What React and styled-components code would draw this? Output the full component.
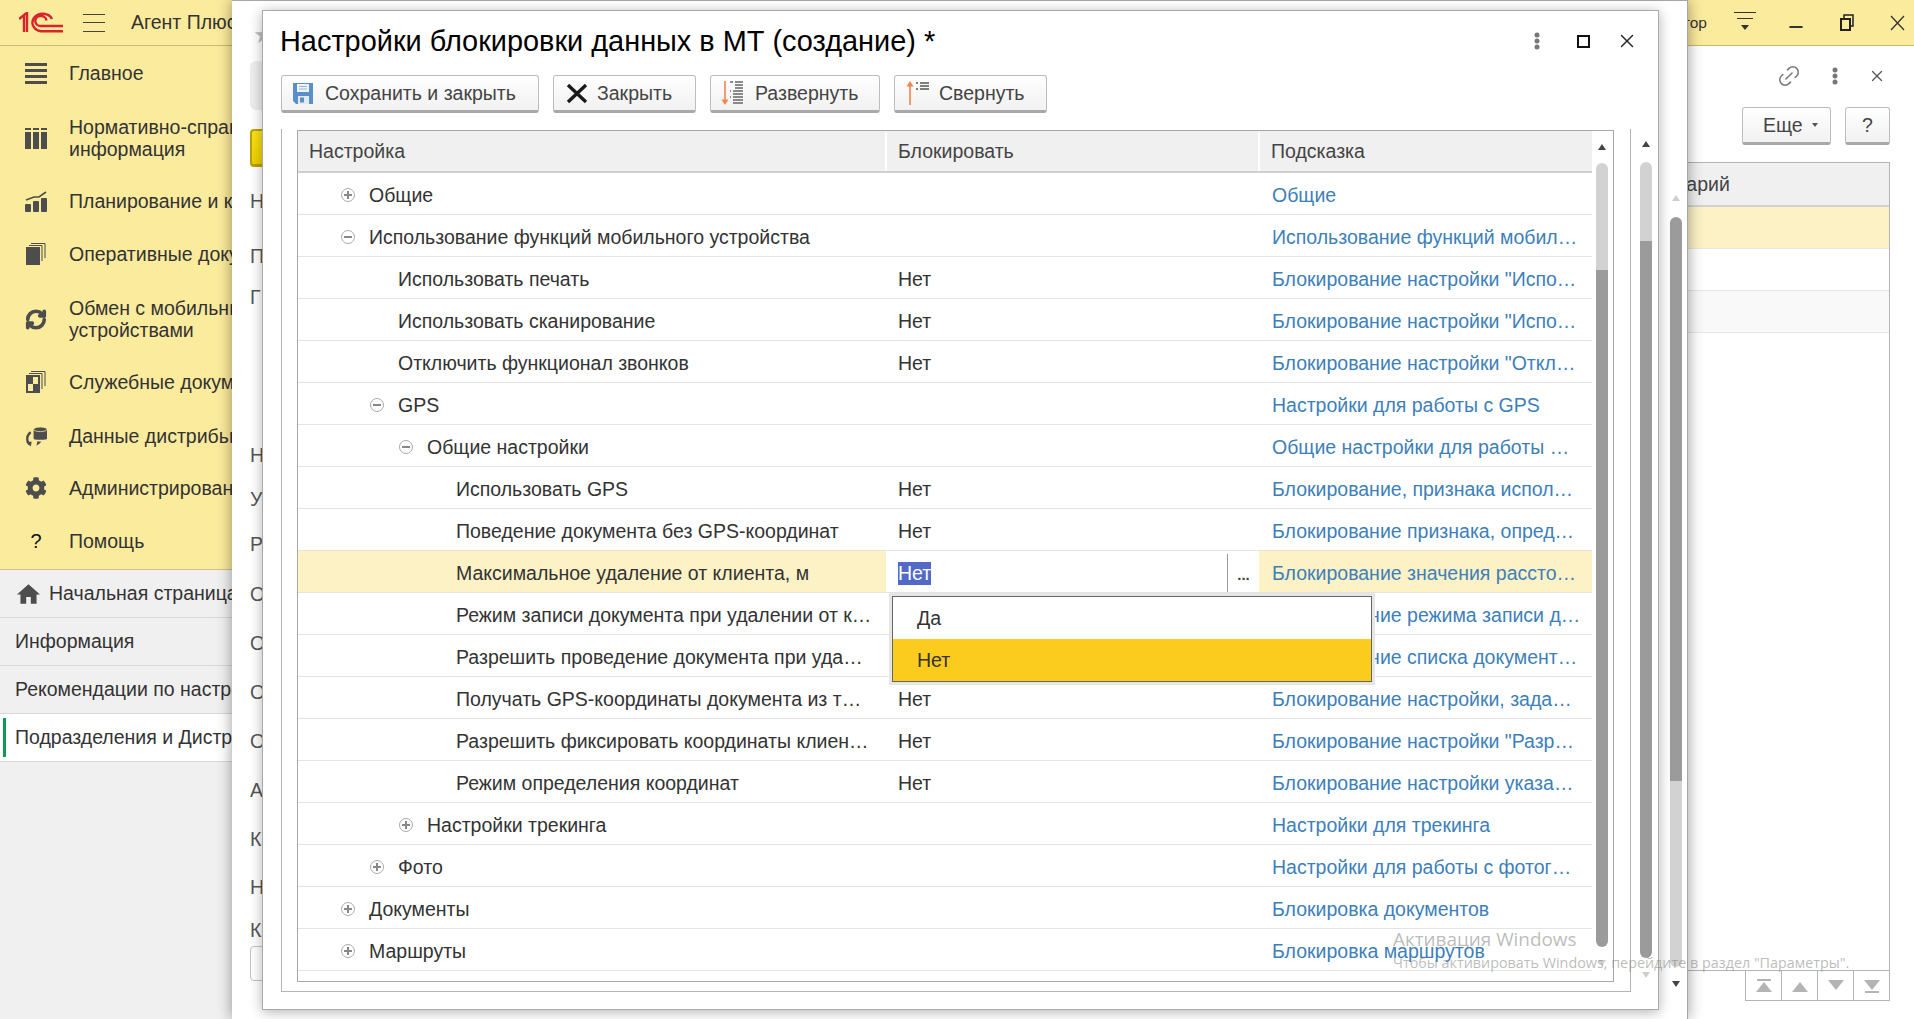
import React from "react";
import styled, { createGlobalStyle } from "styled-components";
import { RefreshCw, Link2, X, Minus } from "lucide-react";
import { FaCog } from "react-icons/fa";

const GlobalStyle = createGlobalStyle`
  html, body {
    margin: 0;
    height: 100%;
    overflow: hidden;
    background: #fff;
  }
  * { box-sizing: border-box; }
  body {
    font-family: "Liberation Sans", Arial, sans-serif;
    font-size: 19.5px;
    color: #333;
  }
`;

const Page = styled.div`
  position: relative;
  width: 1914px;
  height: 1019px;
  overflow: hidden;
  display: flex;
  flex-direction: column;
`;

const TopBar = styled.header`
  height: 46px;
  flex: none;
  display: flex;
  align-items: center;
  background: #fbeb9d;
  border-bottom: 1px solid #c9b974;
  padding-left: 19px;
`;

const Burger = styled.div`
  width: 22px;
  margin: 0 26px 0 20px;
  height: 18px;
  border-top: 1px solid #444;
  border-bottom: 1px solid #444;
  display: flex;
  align-items: center;
  &::before {
    content: "";
    flex: 1;
    height: 1px;
    background: #444;
  }
`;

const AppName = styled.div`
  white-space: nowrap;
`;

const TopRight = styled.div`
  margin-left: auto;
  display: flex;
  align-items: center;
  height: 100%;
`;

const UserName = styled.div`
  width: 120px;
  text-align: right;
  font-size: 15.5px;
  margin-right: 12px;
`;

const TopIcon = styled.div`
  width: ${(p) => p.$w || 51}px;
  margin-left: ${(p) => p.$ml || 0}px;
  display: flex;
  justify-content: center;
  color: #333;
`;

const Body = styled.div`
  flex: 1;
  display: flex;
  min-height: 0;
`;

const Sidebar = styled.aside`
  width: 232px;
  flex: none;
  overflow: hidden;
  display: flex;
  flex-direction: column;
  background: #f0f0f0;
`;

const SectionList = styled.nav`
  background: #fbeb9d;
  border-bottom: 1px solid #cfc187;
  display: flex;
  flex-direction: column;
`;

const SectionItem = styled.div`
  height: ${(p) => p.$h}px;
  display: flex;
  align-items: center;
  padding-left: 25px;
  gap: 22px;
  line-height: 22px;
  white-space: nowrap;
`;

const SectionIcon = styled.div`
  width: 22px;
  display: flex;
  justify-content: center;
  color: #4d4d4d;
  flex: none;
  font-size: 20px;
`;

const Tab = styled.div`
  height: 48px;
  display: flex;
  align-items: center;
  gap: 9px;
  padding-left: ${(p) => (p.$home ? 17 : 15)}px;
  position: relative;
  white-space: nowrap;
  background: ${(p) => (p.$active ? "#fff" : "#f0f0f0")};
  border-bottom: 1px solid #d8d8d8;
  svg {
    flex: none;
  }
  ${(p) =>
    p.$active &&
    `&::before {
      content: "";
      position: absolute;
      left: 3px;
      top: 4px;
      bottom: 4px;
      width: 3px;
      background: #0c9a54;
    }`}
`;

const Workspace = styled.main`
  flex: 1;
  min-width: 0;
  padding: 0 24px 18px 0;
  display: flex;
  flex-direction: column;
  align-items: stretch;
`;

const TitleTools = styled.div`
  height: 60px;
  display: flex;
  justify-content: flex-end;
  align-items: center;
  gap: 30px;
  padding-right: 4px;
  margin-bottom: 1px;
  color: #777;
`;

const CommandRow = styled.div`
  display: flex;
  justify-content: flex-end;
  gap: 14px;
`;

const Button = styled.button`
  height: 38px;
  width: ${(p) => p.$w}px;
  flex: none;
  display: flex;
  align-items: center;
  justify-content: ${(p) => (p.$pad ? "flex-start" : "center")};
  gap: ${(p) => p.$gap || 10}px;
  padding: 0 0 0 ${(p) => p.$pad || 0}px;
  font-family: inherit;
  font-size: 19.5px;
  color: #444;
  background: linear-gradient(#ffffff, #f1f1f1);
  border: 1px solid #bdbdbd;
  border-bottom: 3px solid #a9a9a9;
  border-radius: 3px;
`;

const Caret = styled.span`
  width: 0;
  height: 0;
  border-left: 3.5px solid transparent;
  border-right: 3.5px solid transparent;
  border-top: 4px solid #555;
`;

const ListBox = styled.div`
  margin-top: 17px;
  flex: 1;
  border: 1px solid #b4b4b4;
  display: flex;
  flex-direction: column;
`;

const ListHead = styled.div`
  height: 44px;
  display: grid;
  grid-template-columns: 1fr 282px;
  align-items: center;
  background: #f0f0f0;
  border-bottom: 2px solid #d2d2d2;
  color: #444;
`;

const ListRow = styled.div`
  height: 42px;
  background: ${(p) => p.$bg};
  border-bottom: 1px solid #e6e6e6;
`;

const Pager = styled.div`
  align-self: flex-end;
  display: flex;
  border-left: 1px solid #b4b4b4;
  border-bottom: 1px solid #b4b4b4;
`;

const PagerCell = styled.div`
  width: 36px;
  height: 29px;
  border-right: 1px solid #b4b4b4;
  display: flex;
  align-items: center;
  justify-content: center;
`;

/* окно формы, из которой открыта настройка (лежит за диалогом) */
const BackWindow = styled.section`
  position: absolute;
  left: 232px;
  top: 0;
  width: 1456px;
  height: 1019px;
  background: #fff;
  border-top: 1px solid #a6a6a6;
  border-right: 1px solid #a6a6a6;
  box-shadow: 0 0 14px rgba(0, 0, 0, 0.4);
  display: flex;
  justify-content: flex-end;
  padding: 0 5px 0 18px;
`;

const BackForm = styled.div`
  flex: 1;
  display: flex;
  flex-direction: column;
  min-width: 0;
`;

const Star = styled.div`
  height: 60px;
  padding: 22px 0 0 3px;
  color: #b9bfc7;
  font-size: 24px;
  line-height: 24px;
`;

const BackToolbar = styled.div`
  height: 49px;
  width: 300px;
  background: #eeeeee;
  border-radius: 6px;
`;

const BackPrimary = styled.div`
  height: 38px;
  width: 200px;
  margin-top: 19px;
  background: linear-gradient(#fce21a, #f0cf00);
  border: 2px solid #b7a300;
  border-bottom-width: 3px;
  border-radius: 4px;
`;

const FormLabel = styled.div`
  margin-top: ${(p) => p.$top}px;
  line-height: 24px;
  color: #555;
`;

const BackInput = styled.div`
  height: 35px;
  width: 300px;
  margin-top: 4px;
  border: 1px solid #c4c4c4;
  border-radius: 4px;
`;

const ScrollColumn = styled.div`
  width: ${(p) => p.$w || 12}px;
  flex: none;
  display: flex;
  flex-direction: column;
  align-items: center;
  padding-top: ${(p) => p.$top}px;
`;

const ScrollPart = styled.div`
  width: 12px;
  height: ${(p) => p.$h}px;
  background: ${(p) => (p.$dark ? "#9b9b9b" : "#d2d2d2")};
  border-radius: ${(p) => (p.$start ? "6px 6px 0 0" : p.$end ? "0 0 6px 6px" : "0")};
  flex: none;
`;

const Arrow = styled.div`
  width: 0;
  height: 0;
  flex: none;
  margin-top: ${(p) => p.$mt || 0}px;
  margin-bottom: ${(p) => p.$mb || 0}px;
  border-left: 4px solid transparent;
  border-right: 4px solid transparent;
  ${(p) =>
    p.$down
      ? `border-top: 6px solid ${p.$c};`
      : `border-bottom: 6px solid ${p.$c};`}
`;

const Dialog = styled.section`
  position: absolute;
  left: 262px;
  top: 10px;
  width: 1397px;
  height: 1000px;
  background: #fff;
  border: 1px solid #a9a9a9;
  box-shadow: 0 2px 12px rgba(0, 0, 0, 0.3);
  display: flex;
  padding: 0 6px 0 18px;
`;

const DialogMain = styled.div`
  flex: 1;
  min-width: 0;
  display: flex;
  flex-direction: column;
`;

const TitleRow = styled.div`
  height: 47px;
  display: flex;
  align-items: center;
  padding-top: 13px;
`;

const Title = styled.h1`
  margin: 0 0 0 -1px;
  font-size: 28.9px;
  font-weight: 400;
  color: #000;
  white-space: nowrap;
`;

const WindowTools = styled.div`
  margin-left: auto;
  margin-right: 2px;
  display: flex;
  align-items: center;
  gap: 22px;
`;

const ToolDots = styled.span`
  display: flex;
  margin-right: 15px;
`;

const DialogCommands = styled.div`
  height: 39px;
  margin-top: 17px;
  display: flex;
  gap: 14px;
`;

const Frame = styled.div`
  margin-top: 15px;
  width: 1350px;
  height: 863px;
  border-left: 1px solid #b4b4b4;
  border-right: 1px solid #b4b4b4;
  border-bottom: 1px solid #b4b4b4;
  padding: 1px 16px 9px 15px;
`;

const Table = styled.div`
  height: 100%;
  border: 1px solid #a8a8a8;
  display: flex;
`;

const TableBody = styled.div`
  width: 1294px;
  flex: none;
  display: flex;
  flex-direction: column;
`;

const Columns = styled.div`
  display: grid;
  grid-template-columns: 588px 373px 1fr;
`;

const HeadRow = styled(Columns)`
  height: 42px;
  padding-top: 1px;
  background: #f0f0f0;
  border-bottom: 2px solid #cfcfcf;
  color: #444;
`;

const HeadCell = styled.div`
  padding-left: 11px;
  display: flex;
  align-items: center;
  border-left: ${(p) => (p.$first ? "0" : "2px solid #fff")};
  margin-left: ${(p) => (p.$first ? 0 : -1)}px;
`;

const Row = styled(Columns)`
  height: 42px;
  padding-top: 3px;
  border-bottom: 1px solid #e4e4e4;
  background: ${(p) => (p.$selected ? "#fdf2c6" : "#fff")};
`;

const TreeCell = styled.div`
  display: flex;
  align-items: center;
  padding-left: ${(p) => p.$level * 29 + 43}px;
  white-space: nowrap;
  overflow: hidden;
`;

const Toggle = styled.span`
  width: 14px;
  height: 14px;
  flex: none;
  margin-right: 14px;
  border: 1px solid #aaa;
  border-radius: 50%;
  position: relative;
  &::before {
    content: "";
    position: absolute;
    left: 2px;
    right: 2px;
    top: 5px;
    height: 2px;
    background: #888;
  }
  ${(p) =>
    p.$plus &&
    `&::after {
      content: "";
      position: absolute;
      top: 2px;
      bottom: 2px;
      left: 5px;
      width: 2px;
      background: #888;
    }`}
`;

const ToggleGap = styled.span`
  width: 28px;
  flex: none;
`;

const ValueCell = styled.div`
  display: flex;
  align-items: center;
  padding-left: 12px;
  white-space: nowrap;
`;

const EditCell = styled.div`
  display: flex;
  align-items: center;
  background: #fff;
  padding-left: 12px;
  margin: -3px 0 0;
  padding-top: 3px;
`;

const EditValue = styled.span`
  background: #5269c6;
  color: #fff;
  line-height: 23px;
`;

const Choice = styled.span`
  margin-left: auto;
  width: 32px;
  align-self: stretch;
  border-left: 1px solid #999;
  display: flex;
  align-items: center;
  justify-content: center;
  font-weight: 700;
  font-size: 15px;
  color: #444;
  padding-top: 3px;
`;

const HintCell = styled.div`
  display: flex;
  align-items: center;
  padding-left: 13px;
  color: #3d7fbb;
  white-space: nowrap;
`;

const Dropdown = styled.ul`
  position: absolute;
  left: 892px;
  top: 596px;
  width: 480px;
  margin: 0;
  padding: 0;
  list-style: none;
  background: #fff;
  border: 1px solid #666;
  box-shadow: 0 0 0 3px #e6e6e6;
`;

const DropdownItem = styled.li`
  height: 42px;
  display: flex;
  align-items: center;
  padding-left: 24px;
  background: ${(p) => (p.$current ? "#fbcb1e" : "#fff")};
`;

const Watermark = styled.div`
  position: absolute;
  left: 1393px;
  top: 926px;
  pointer-events: none;
  color: rgba(130, 130, 130, 0.55);
  font-family: "Open Sans", sans-serif;
  white-space: nowrap;
`;

const WatermarkTitle = styled.div`
  font-size: 18.9px;
  line-height: 26px;
`;

const WatermarkText = styled.div`
  font-size: 14.35px;
  line-height: 20px;
  margin-top: 1px;
`;

const Logo = () => (
  <svg width="44" height="21" viewBox="0 0 44 21" fill="none" stroke="#d9232e" strokeWidth="2.4">
    <path d="M0 7 L5 3 V20 M5 3 L8 1 V20" />
    <path d="M33 7 A10.2 8.8 0 1 0 22 19.2 H44" />
    <path d="M27.5 8.5 A5.6 5 0 1 0 22 14 H44" />
  </svg>
);

const IconMain = () => (
  <svg width="22" height="21" viewBox="0 0 22 21" fill="currentColor">
    <rect y="0" width="22" height="3" />
    <rect y="6" width="22" height="3" />
    <rect y="12" width="22" height="3" />
    <rect y="18" width="22" height="3" />
  </svg>
);

const IconCatalog = () => (
  <svg width="22" height="21" viewBox="0 0 22 21" fill="currentColor">
    <path d="M0 0h6v2H0zM8 0h6v2H8zM16 0h6v2h-6zM0 4h6v17H0zM8 4h6v17H8zM16 4h6v17h-6z" />
  </svg>
);

const IconPlan = () => (
  <svg width="22" height="21" viewBox="0 0 22 21" fill="currentColor">
    <rect x="0" y="13" width="6" height="8" rx="1" />
    <rect x="8" y="10" width="6" height="11" rx="1" />
    <rect x="16" y="7" width="6" height="14" rx="1" />
    <path d="M1 9 L9 6 L14 6 L21 1" fill="none" stroke="currentColor" strokeWidth="1.6" />
  </svg>
);

const IconDocs = () => (
  <svg width="20" height="22" viewBox="0 0 20 22" fill="currentColor">
    <rect x="0" y="4" width="14" height="18" />
    <path d="M3 2.5H16V18" fill="none" stroke="currentColor" strokeWidth="1" />
    <path d="M5 .5H19V15" fill="none" stroke="currentColor" strokeWidth="1" />
  </svg>
);

const IconService = () => (
  <svg width="20" height="22" viewBox="0 0 20 22" fill="currentColor">
    <rect x="0" y="4" width="14" height="18" />
    <rect x="7" y="6" width="5" height="7" fill="#fbeb9d" />
    <rect x="2" y="13" width="5" height="7" fill="#fbeb9d" />
    <path d="M3 2.5H16V18" fill="none" stroke="currentColor" strokeWidth="1" />
    <path d="M5 .5H19V15" fill="none" stroke="currentColor" strokeWidth="1" />
  </svg>
);

const IconData = () => (
  <svg width="23" height="21" viewBox="0 0 23 21" fill="currentColor">
    <path d="M9 3H23V12.5C23 14.5 9 14.5 9 12.5z" />
    <ellipse cx="16" cy="3" rx="7" ry="2.4" stroke="#fbeb9d" strokeWidth="0.8" />
    <path d="M6 6 C1.5 9 1 15 5 19" fill="none" stroke="currentColor" strokeWidth="2.4" />
    <path d="M1 16l6 0-1 5z" />
    <path d="M12 20c2-1 4-2.500 5-4l-4-.5z" />
  </svg>
);

const IconHome = () => (
  <svg width="23" height="20" viewBox="2 3 20 17" fill="#4d4d4d">
    <path d="M12 3 L2 12h3v8h5v-6h4v6h5v-8h3z" />
  </svg>
);

const IconSave = () => (
  <svg width="20" height="21" viewBox="0 0 20 21">
    <path d="M0 0H20V21H3L0 18z" fill="#5b8fc7" />
    <rect x="4" y="1" width="12" height="8" fill="#f0f4f9" />
    <path d="M6 3.500h8M6 6h8" stroke="#9ab5d4" />
    <rect x="5" y="13" width="11" height="8" fill="#e6e9ec" />
    <rect x="7" y="14.500" width="4" height="5" fill="#5b8fc7" />
  </svg>
);

const IconClose = () => (
  <svg width="22" height="21" viewBox="0 0 22 21" stroke="#1a1a1a" strokeWidth="3.4">
    <path d="M2 2L20 19M20 2L2 19" />
  </svg>
);

const IconExpand = () => (
  <svg width="24" height="26" viewBox="0 0 24 26" fill="none">
    <path d="M4 1V23" stroke="#f2854a" strokeWidth="1.600" />
    <path d="M0.500 19.500H7.500L4 25z" fill="#f2854a" />
    <path d="M9 2h3M14 2h8M14 5h8M14 8h8M12 11h10M12 14h10M12 17h10M12 20h10M12 23h10" stroke="#666" strokeWidth="1.300" />
    <path d="M9 11h1M9 17h1" stroke="#666" strokeWidth="1.300" />
  </svg>
);

const IconCollapse = () => (
  <svg width="24" height="26" viewBox="0 0 24 26" fill="none">
    <path d="M4 25V3" stroke="#f2854a" strokeWidth="1.600" />
    <path d="M0.500 6.500H7.500L4 1z" fill="#f2854a" />
    <path d="M10 3h2M14 3h9M14 6h9M10 9h2M14 9h9" stroke="#555" strokeWidth="1.500" />
  </svg>
);

const Dots = ({ color = "#777" }) => (
  <svg width="6" height="18" viewBox="0 0 6 18" fill={color}>
    <circle cx="3" cy="3" r="2.500" />
    <circle cx="3" cy="9" r="2.500" />
    <circle cx="3" cy="15" r="2.500" />
  </svg>
);

const IconFilterMenu = () => (
  <svg width="22" height="23" viewBox="0 0 22 23" stroke="#333" fill="none">
    <path d="M0 1.500H22M3 7.500H19" strokeWidth="1.200" />
    <path d="M7 14h8l-4 5z" fill="#333" stroke="none" />
  </svg>
);

const IconRestore = () => (
  <svg width="14" height="17" viewBox="0 0 14 17" fill="none" stroke="#222" strokeWidth="2">
    <rect x="1" y="5" width="9" height="11" />
    <path d="M4 4V1H13V12H11" strokeWidth="1.500" />
  </svg>
);

const IconWinClose = () => (
  <svg width="15" height="16" viewBox="0 0 15 16" fill="none" stroke="#333" strokeWidth="1.300">
    <path d="M1 1L14 15M14 1L1 15" />
  </svg>
);

const IconMaximize = () => (
  <svg width="13" height="13" viewBox="0 0 13 13" fill="none" stroke="#111" strokeWidth="2">
    <rect x="1" y="1" width="11" height="11" />
  </svg>
);

const PageEnd = ({ up, bar }) => (
  <svg width="18" height="14" viewBox="0 0 18 14" fill="#b4b4b4">
    {bar && <rect x="2" y={up ? 0 : 12} width="14" height="2" />}
    <path d={up ? "M9 3L17 13H1z" : "M1 1H17L9 11z"} />
  </svg>
);

const sections = [
  { h: 54, icon: <IconMain />, text: "Главное" },
  { h: 76, icon: <IconCatalog />, text: ["Нормативно-справочная", "информация"] },
  { h: 50, icon: <IconPlan />, text: "Планирование и контроль" },
  { h: 56, icon: <IconDocs />, text: "Оперативные документы" },
  { h: 74, icon: <RefreshCw size={23} strokeWidth={4} />, text: ["Обмен с мобильными", "устройствами"] },
  { h: 52, icon: <IconService />, text: "Служебные документы" },
  { h: 56, icon: <IconData />, text: "Данные дистрибьютора" },
  { h: 48, icon: <FaCog size={22} />, text: "Администрирование" },
  { h: 57, icon: <span style={{ color: "#111" }}>?</span>, text: "Помощь" },
];

const tabs = ["Информация", "Рекомендации по настройке", "Подразделения и Дистрибьюторы"];

const backLabels = [
  ["Н", 22], ["П", 31], ["Г", 17], ["Н", 134], ["У", 20], ["Р", 21], ["О", 26],
  ["О", 25], ["О", 25], ["О", 25], ["А", 25], ["К", 25], ["Н", 24], ["К", 19],
];

const rows = [
  { level: 0, toggle: "plus", name: "Общие", hint: "Общие" },
  { level: 0, toggle: "minus", name: "Использование функций мобильного устройства", hint: "Использование функций мобил…" },
  { level: 1, name: "Использовать печать", value: "Нет", hint: 'Блокирование настройки "Испо…' },
  { level: 1, name: "Использовать сканирование", value: "Нет", hint: 'Блокирование настройки "Испо…' },
  { level: 1, name: "Отключить функционал звонков", value: "Нет", hint: 'Блокирование настройки "Откл…' },
  { level: 1, toggle: "minus", name: "GPS", hint: "Настройки для работы с GPS" },
  { level: 2, toggle: "minus", name: "Общие настройки", hint: "Общие настройки для работы …" },
  { level: 3, name: "Использовать GPS", value: "Нет", hint: "Блокирование, признака испол…" },
  { level: 3, name: "Поведение документа без GPS-координат", value: "Нет", hint: "Блокирование признака, опред…" },
  { level: 3, name: "Максимальное удаление от клиента, м", editing: true, hint: "Блокирование значения рассто…" },
  { level: 3, name: "Режим записи документа при удалении от к…", value: "Нет", hint: "Блокирование режима записи д…" },
  { level: 3, name: "Разрешить проведение документа при уда…", value: "Нет", hint: "Блокирование списка документ…" },
  { level: 3, name: "Получать GPS-координаты документа из т…", value: "Нет", hint: "Блокирование настройки, зада…" },
  { level: 3, name: "Разрешить фиксировать координаты клиен…", value: "Нет", hint: 'Блокирование настройки "Разр…' },
  { level: 3, name: "Режим определения координат", value: "Нет", hint: "Блокирование настройки указа…" },
  { level: 2, toggle: "plus", name: "Настройки трекинга", hint: "Настройки для трекинга" },
  { level: 1, toggle: "plus", name: "Фото", hint: "Настройки для работы с фотог…" },
  { level: 0, toggle: "plus", name: "Документы", hint: "Блокировка документов" },
  { level: 0, toggle: "plus", name: "Маршруты", hint: "Блокировка маршрутов" },
];

const Scrollbar = ({ top, parts, upColor, downColor, upGap, downGap, w }) => (
  <ScrollColumn $top={top} $w={w}>
    <Arrow $c={upColor} $mb={upGap} />
    {parts.map((p, i) => (
      <ScrollPart
        key={i}
        $h={p.h}
        $dark={p.dark}
        $start={i === 0}
        $end={i === parts.length - 1}
      />
    ))}
    <Arrow $down $c={downColor} $mt={downGap} />
  </ScrollColumn>
);

const App = () => (
  <Page>
    <GlobalStyle />
    <TopBar>
      <Logo />
      <Burger />
      <AppName>Агент Плюс</AppName>
      <TopRight>
        <UserName>Администратор</UserName>
        <TopIcon><IconFilterMenu /></TopIcon>
        <TopIcon><Minus size={20} strokeWidth={2.4} style={{ marginTop: 8 }} /></TopIcon>
        <TopIcon><IconRestore /></TopIcon>
        <TopIcon $w={34} $ml={8}><IconWinClose /></TopIcon>
      </TopRight>
    </TopBar>

    <Body>
      <Sidebar>
        <SectionList>
          {sections.map((s, i) => (
            <SectionItem key={i} $h={s.h}>
              <SectionIcon>{s.icon}</SectionIcon>
              <div>
                {Array.isArray(s.text)
                  ? s.text.map((t) => <div key={t}>{t}</div>)
                  : s.text}
              </div>
            </SectionItem>
          ))}
        </SectionList>
        <Tab $home>
          <IconHome />
          Начальная страница
        </Tab>
        {tabs.map((t, i) => (
          <Tab key={t} $active={i === tabs.length - 1}>{t}</Tab>
        ))}
      </Sidebar>

      <Workspace>
        <TitleTools>
          <Link2 size={26} strokeWidth={1.4} style={{ transform: "rotate(-45deg)" }} />
          <Dots />
          <X size={18} strokeWidth={1.6} color="#555" />
        </TitleTools>
        <CommandRow>
          <Button $w={89} $pad={20} $gap={9}>Еще <Caret /></Button>
          <Button $w={45}>?</Button>
        </CommandRow>
        <ListBox>
          <ListHead>
            <span />
            <span>Комментарий</span>
          </ListHead>
          <ListRow $bg="#fdf2c6" />
          <ListRow $bg="#fff" />
          <ListRow $bg="#f9f9f9" />
        </ListBox>
        <Pager>
          <PagerCell><PageEnd up bar /></PagerCell>
          <PagerCell><PageEnd up /></PagerCell>
          <PagerCell><PageEnd /></PagerCell>
          <PagerCell><PageEnd bar /></PagerCell>
        </Pager>
      </Workspace>
    </Body>

    <BackWindow>
      <BackForm>
        <Star>★</Star>
        <BackToolbar />
        <BackPrimary />
        {backLabels.map(([t, top], i) => (
          <FormLabel key={i} $top={top}>{t}</FormLabel>
        ))}
        <BackInput />
      </BackForm>
      <Scrollbar
        top={194}
        upColor="#cfcfcf"
        upGap={16}
        downColor="#444"
        downGap={14}
        parts={[{ h: 564, dark: true }, { h: 186 }]}
      />
    </BackWindow>

    <Dialog>
      <DialogMain>
        <TitleRow>
          <Title>Настройки блокировки данных в МТ (создание) *</Title>
          <WindowTools>
            <ToolDots><Dots /></ToolDots>
            <IconMaximize />
            <X size={22} strokeWidth={1.5} color="#222" style={{ marginLeft: 4 }} />
          </WindowTools>
        </TitleRow>
        <DialogCommands>
          <Button $w={258} $pad={11} $gap={12}><IconSave /> Сохранить и закрыть</Button>
          <Button $w={143} $pad={12} $gap={9}><IconClose /> Закрыть</Button>
          <Button $w={170} $pad={10}><IconExpand /> Развернуть</Button>
          <Button $w={153} $pad={11} $gap={9}><IconCollapse /> Свернуть</Button>
        </DialogCommands>
        <Frame>
          <Table>
            <TableBody>
              <HeadRow>
                <HeadCell $first>Настройка</HeadCell>
                <HeadCell>Блокировать</HeadCell>
                <HeadCell>Подсказка</HeadCell>
              </HeadRow>
              {rows.map((r) => (
                <Row key={r.name} $selected={r.editing}>
                  <TreeCell $level={r.level}>
                    {r.toggle ? <Toggle $plus={r.toggle === "plus"} /> : <ToggleGap />}
                    {r.name}
                  </TreeCell>
                  {r.editing ? (
                    <EditCell>
                      <EditValue>Нет</EditValue>
                      <Choice>...</Choice>
                    </EditCell>
                  ) : (
                    <ValueCell>{r.value}</ValueCell>
                  )}
                  <HintCell>{r.hint}</HintCell>
                </Row>
              ))}
            </TableBody>
            <Scrollbar
              w={20}
              top={13}
              upColor="#444"
              upGap={13}
              downColor="#cfcfcf"
              downGap={13}
              parts={[{ h: 107 }, { h: 677, dark: true }]}
            />
          </Table>
        </Frame>
      </DialogMain>
      <Scrollbar
        top={130}
        upColor="#444"
        upGap={15}
        downColor="#cfcfcf"
        downGap={14}
        parts={[{ h: 79 }, { h: 717, dark: true }]}
      />
    </Dialog>

    <Dropdown>
      <DropdownItem>Да</DropdownItem>
      <DropdownItem $current>Нет</DropdownItem>
    </Dropdown>

    <Watermark>
      <WatermarkTitle>Активация Windows</WatermarkTitle>
      <WatermarkText>Чтобы активировать Windows, перейдите в раздел "Параметры".</WatermarkText>
    </Watermark>
  </Page>
);

export default App;
